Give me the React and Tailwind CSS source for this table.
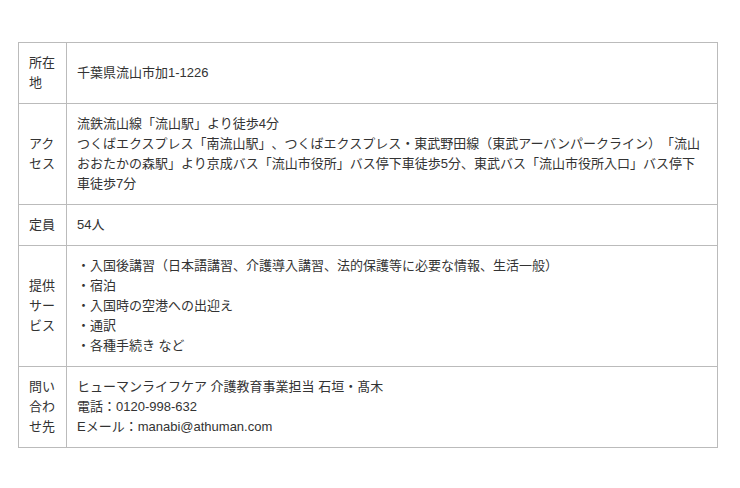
import React from 'react';

const ROWS = [
  { head: '所在地', body: ['千葉県流山市加1-1226'] },
  {
    head: 'アクセス',
    body: [
      '流鉄流山線「流山駅」より徒歩4分',
      'つくばエクスプレス「南流山駅」、つくばエクスプレス・東武野田線（東武アーバンパークライン）「流山おおたかの森駅」より京成バス「流山市役所」バス停下車徒歩5分、東武バス「流山市役所入口」バス停下車徒歩7分',
    ],
  },
  { head: '定員', body: ['54人'] },
  {
    head: '提供サービス',
    body: [
      '・入国後講習（日本語講習、介護導入講習、法的保護等に必要な情報、生活一般）',
      '・宿泊',
      '・入国時の空港への出迎え',
      '・通訳',
      '・各種手続き など',
    ],
  },
  {
    head: '問い合わせ先',
    body: ['ヒューマンライフケア 介護教育事業担当 石垣・髙木', '電話：0120-998-632', 'Eメール：manabi@athuman.com'],
  },
];

export default function App() {
  return (
    <div
      className="w-[740px] h-[488px] bg-white pt-[42px] pl-[18px]"
      style={{ fontFamily: '"Liberation Sans", "Noto Sans CJK JP", sans-serif' }}
    >
      <table className="w-[700px] border-collapse text-[13px] leading-[20px] text-[#333] [text-spacing-trim:space-all]">
        <tbody>
          {ROWS.map((row) => (
            <tr key={row.head}>
              <th className="w-[48px] border border-[#bbb] px-[10px] py-[10px] text-left font-normal align-middle break-all">
                {row.head}
              </th>
              <td className="border border-[#bbb] px-[10px] py-[10px] align-middle">
                {row.body.map((line, i) => (
                  <div key={i}>{line}</div>
                ))}
              </td>
            </tr>
          ))}
        </tbody>
      </table>
    </div>
  );
}
